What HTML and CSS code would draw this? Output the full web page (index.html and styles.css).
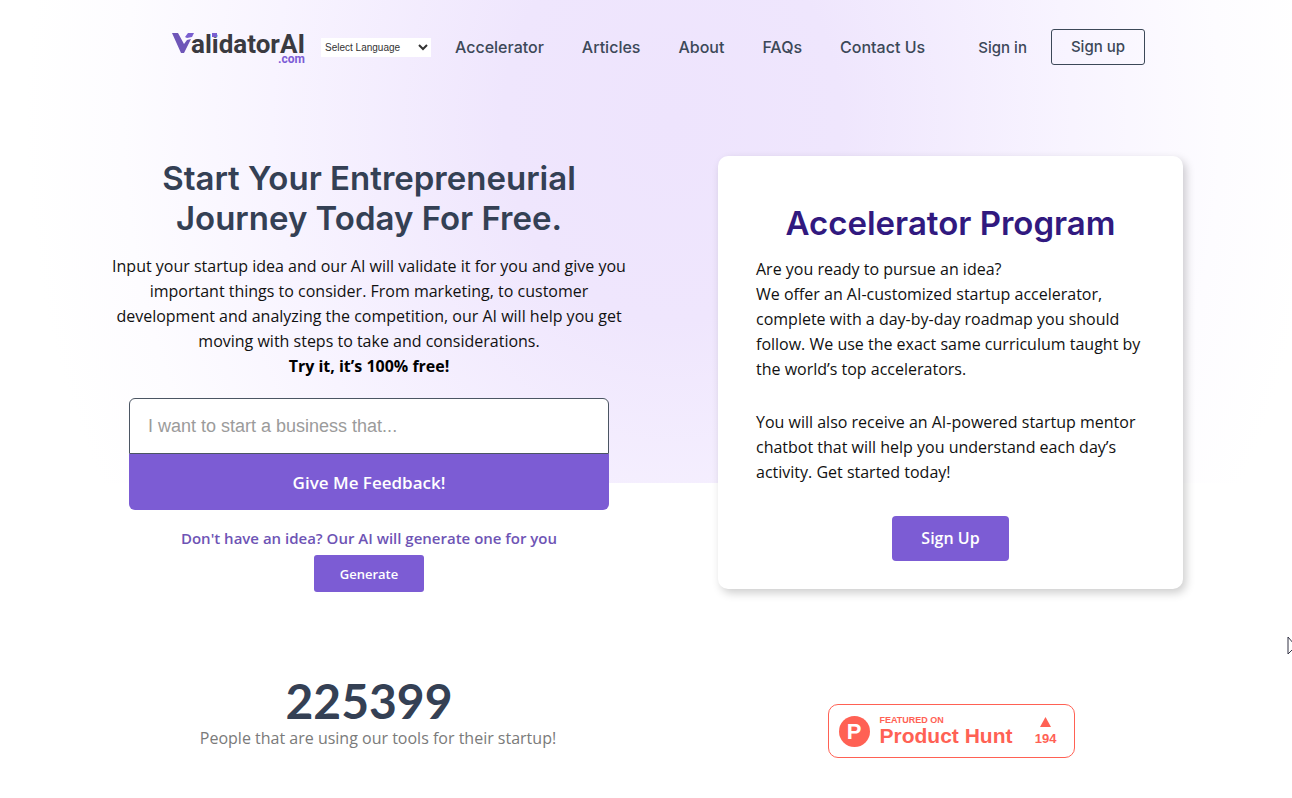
FILE: index.html
```html
<!DOCTYPE html>
<html lang="en">
  <head>
    <meta charset="UTF-8" />
    <meta name="viewport" content="width=device-width, initial-scale=1.0" />
    <title>ValidatorAI.com</title>
    <link rel="stylesheet" href="styles.css">
  </head>

  <body>
    <div class="hero-bg"></div>

    <header class="header">
      <a class="logo" href="#" aria-label="ValidatorAI.com">
        <svg width="134" height="40" viewBox="0 0 134 40">
          <path d="M0 6h6l6 11 3-4 4-1-7 14H9z" fill="#6f56b8" />
          <path d="M13 10l3-4h6l-2 4-5 1z" fill="#7a5fd0" />
          <text class="logo-name" x="19" y="26">alidator</text>
          <text class="logo-name" x="133" y="26" text-anchor="end">AI</text>
          <rect x="40" y="6" width="5" height="4" fill="#7a5fd0" />
          <text class="logo-com" x="133" y="36" text-anchor="end">.com</text>
        </svg>
      </a>
      <select class="language" aria-label="Select Language">
        <option>Select Language</option>
      </select>
      <nav class="nav">
        <a href="#">Accelerator</a>
        <a href="#">Articles</a>
        <a href="#">About</a>
        <a href="#">FAQs</a>
        <a href="#">Contact Us</a>
      </nav>
      <div class="account">
        <a href="#">Sign in</a>
        <a class="signup" href="#">Sign up</a>
      </div>
    </header>

    <main class="columns">
      <section class="intro">
        <h1>Start Your Entrepreneurial Journey Today For Free.</h1>
        <p>
          Input your startup idea and our AI will validate it for you and give you
          important things to consider. From marketing, to customer
          development and analyzing the competition, our AI will help you get
          moving with steps to take and considerations.<br />
          <strong>Try it, it’s 100% free!</strong>
        </p>
        <form class="idea-form">
          <input type="text" placeholder="I want to start a business that..." aria-label="Your business idea" />
          <button type="button">Give Me Feedback!</button>
        </form>
        <p class="no-idea">Don't have an idea? Our AI will generate one for you</p>
        <button class="generate" type="button">Generate</button>
      </section>

      <section class="card">
        <h2>Accelerator Program</h2>
        <p>
          Are you ready to pursue an idea?<br />
          We offer an AI-customized startup accelerator, complete with a
          day-by-day roadmap you should follow. We use the exact same
          curriculum taught by the world’s top accelerators.
        </p>
        <p>
          You will also receive an AI-powered startup mentor chatbot that will
          help you understand each day’s activity. Get started today!
        </p>
        <a class="card-button" href="#">Sign Up</a>
      </section>
    </main>

    <section class="stats">
      <div class="counter">
        <div class="number">225399</div>
        <div class="caption">People that are using our tools for their startup!</div>
      </div>
      <a class="product-hunt" href="#">
        <span class="ph-logo">P</span>
        <span class="ph-name">
          <small>FEATURED ON</small>
          <b>Product Hunt</b>
        </span>
        <span class="ph-votes">
          <svg width="11" height="10" viewBox="0 0 11 10"><path d="M5.5 0L11 10H0z" fill="#ff6154" /></svg>
          <b>194</b>
        </span>
      </a>
    </section>

    <svg class="pointer" width="5" height="20" viewBox="0 0 5 20">
      <path d="M1 1v17l5-5M1 1l6 7" fill="#fff" stroke="#334" stroke-width="1" />
    </svg>
  </body>
</html>
```

FILE: styles.css
```css
* {
  box-sizing: border-box;
}

body {
  margin: 0;
  position: relative;
  background: #fff;
  color: #111;
  font-family: "Open Sans", "Noto Sans", sans-serif;
  font-size: 16px;
  overflow-x: hidden;
}

a {
  color: inherit;
  text-decoration: none;
}

h1, h2, p {
  margin: 0;
}

/* lilac glow behind the header and the hero */
.hero-bg {
  position: absolute;
  z-index: -1;
  top: 0;
  left: 0;
  right: 0;
  height: 483px;
  background: radial-gradient(ellipse 50% 160% at 52% 25%, #eee4fd 0%, #efe6fd 26%, #f8f4ff 62%, #fdfcff 85%, #fff 100%);
}

.header {
  display: flex;
  align-items: center;
  padding: 27px 147px 0 172px;
  color: #3c4858;
  font-family: Inter, sans-serif;
  font-size: 15px;
  font-weight: 500;
}

.logo svg {
  display: block;
}

.logo-name {
  fill: #3a3a40;
  font-family: "Liberation Sans Narrow", Roboto, sans-serif;
  font-size: 26px;
  font-weight: 700;
}

.logo-com {
  fill: #7c5cd6;
  font-family: Roboto, sans-serif;
  font-size: 12px;
  font-weight: 700;
}

.language {
  width: 110px;
  height: 19px;
  margin-left: 15px;
  padding: 0;
  border: 0;
  background: #fff;
  color: #333;
  font-family: "Liberation Sans", sans-serif;
  font-size: 10px;
}

.nav {
  display: flex;
  gap: 38px;
  margin-left: 24px;
  font-size: 16px;
}

.account {
  display: flex;
  align-items: center;
  gap: 24px;
  margin-left: auto;
}

.signup {
  padding: 0 19px;
  border: 1px solid #3c4858;
  border-radius: 3px;
  line-height: 34px;
}

.columns {
  display: grid;
  grid-template-columns: 1fr 1fr;
  align-items: start;
  padding: 89px 50px 0 78px;
}

h1, h2 {
  font-family: Inter, sans-serif;
  font-size: 33px;
  font-weight: 600;
  line-height: 40px;
  text-align: center;
}

.intro {
  display: flex;
  flex-direction: column;
  align-items: center;
  padding: 2px 30px 0;
  text-align: center;
}

.intro h1 {
  max-width: 480px;
  color: #344054;
}

.intro p {
  margin-top: 16px;
  line-height: 25px;
}

.intro strong {
  color: #000;
}

.idea-form {
  display: flex;
  flex-direction: column;
  align-self: stretch;
  margin: 19px 21px 0;
}

.idea-form input {
  height: 56px;
  padding: 0 18px;
  border: 1px solid #4b5563;
  border-radius: 6px 6px 0 0;
  font-family: "Liberation Sans", sans-serif;
  font-size: 18px;
}

.idea-form input::placeholder {
  color: #9b9b9b;
}

button, .card-button {
  border: 0;
  background: #7c5cd4;
  color: #fff;
  font-family: inherit;
  font-weight: 600;
}

.idea-form button {
  height: 56px;
  border-radius: 0 0 6px 6px;
  font-size: 17px;
}

.intro .no-idea {
  color: #6e54b5;
  font-size: 15px;
  font-weight: 600;
}

.generate {
  height: 37px;
  margin-top: 4px;
  padding: 0 26px;
  border-radius: 3px;
  font-size: 13px;
}

.card {
  display: flex;
  flex-direction: column;
  margin: 0 59px 0 58px;
  padding: 47px 38px 28px;
  border-radius: 10px;
  background: #fff;
  box-shadow: 3px 4px 10px rgba(0, 0, 0, 0.2);
}

.card h2 {
  margin-bottom: 14px;
  color: #31197f;
}

.card p {
  margin-bottom: 28px;
  line-height: 25px;
}

.card-button {
  align-self: center;
  margin-top: 3px;
  padding: 0 29px;
  border-radius: 4px;
  line-height: 45px;
}

.stats {
  display: grid;
  grid-template-columns: 1fr 1fr;
  align-items: end;
  justify-items: center;
  padding: 85px 50px 40px 78px;
}

.counter {
  padding-bottom: 7px;
  text-align: center;
}

.number {
  color: #344054;
  font-family: Lato, sans-serif;
  font-size: 48px;
  font-weight: 700;
  line-height: 48px;
}

.caption {
  padding-left: 18px;
  color: #7a7a7a;
  line-height: 26px;
}

.product-hunt {
  display: flex;
  align-items: center;
  width: 247px;
  height: 54px;
  padding: 0 17px 0 10px;
  border: 1px solid #ff6154;
  border-radius: 10px;
  color: #ff6154;
  font-family: "Liberation Sans", sans-serif;
}

.ph-logo {
  width: 31px;
  border-radius: 50%;
  background: #ff6154;
  color: #fff;
  font-size: 22px;
  font-weight: 700;
  line-height: 31px;
  text-align: center;
}

.ph-name {
  display: flex;
  flex-direction: column;
  margin-left: 10px;
}

.ph-name small {
  font-size: 9px;
  font-weight: 700;
  line-height: 10px;
}

.ph-name b {
  font-size: 21px;
  line-height: 22px;
}

.ph-votes {
  display: flex;
  flex-direction: column;
  align-items: center;
  gap: 4px;
  margin-left: auto;
  font-size: 13px;
}

/* mouse pointer leaving the window */
.pointer {
  position: absolute;
  top: 636px;
  right: 0;
}
```
